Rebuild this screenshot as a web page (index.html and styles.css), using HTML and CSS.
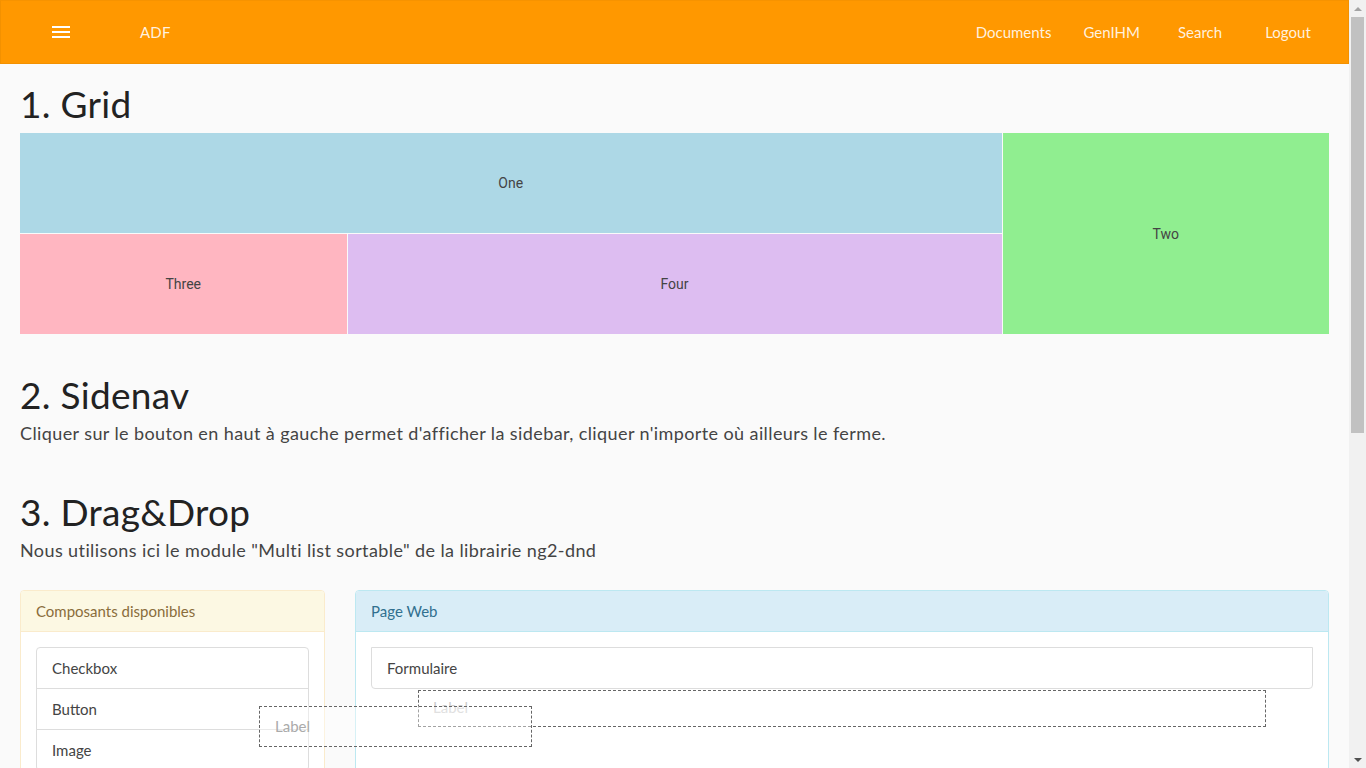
FILE: index.html
```html
<!DOCTYPE html>
<html lang="fr">
<head>
<meta charset="utf-8">
<title>ADF</title>
<link rel="stylesheet" href="styles.css">
</head>
<body>
<header class="toolbar">
  <button class="menu-btn" aria-label="menu">
    <svg width="18" height="12" viewBox="0 0 18 12"><rect x="0" y="0" width="18" height="2" fill="#fff"/><rect x="0" y="5" width="18" height="2" fill="#fff"/><rect x="0" y="10" width="18" height="2" fill="#fff"/></svg>
  </button>
  <span class="brand">ADF</span>
  <nav class="nav">
    <a class="nav-link">Documents</a>
    <a class="nav-link">GenIHM</a>
    <a class="nav-link">Search</a>
    <a class="nav-link">Logout</a>
  </nav>
</header>
<main class="content">
  <h1 class="title first">1. Grid</h1>
  <div class="grid">
    <div class="tile one">One</div>
    <div class="tile two">Two</div>
    <div class="tile three">Three</div>
    <div class="tile four">Four</div>
  </div>

  <h1 class="title sec2">2. Sidenav</h1>
  <p class="lead">Cliquer sur le bouton en haut à gauche permet d'afficher la sidebar, cliquer n'importe où ailleurs le ferme.</p>

  <h1 class="title sec3">3. Drag&amp;Drop</h1>
  <p class="lead">Nous utilisons ici le module "Multi list sortable" de la librairie ng2-dnd</p>

  <div class="dnd">
    <div class="panel panel-warning">
      <div class="panel-heading">Composants disponibles</div>
      <div class="panel-body">
        <ul class="list-group">
          <li class="list-item">Checkbox</li>
          <li class="list-item">Button</li>
          <li class="list-item">Image</li>
        </ul>
      </div>
    </div>
    <div class="panel panel-info">
      <div class="panel-heading">Page Web</div>
      <div class="panel-body drop-zone">
        <ul class="list-group">
          <li class="list-item">Formulaire</li>
        </ul>
        <div class="placeholder">Label</div>
      </div>
    </div>
    <div class="drag-ghost">Label</div>
  </div>
</main>
<div class="scrollbar" aria-hidden="true">
  <div class="sb-arrow up"></div>
  <div class="sb-track"><div class="sb-thumb"></div></div>
  <div class="sb-arrow down"></div>
</div>
</body>
</html>
```
FILE: styles.css
```css
html, body {
  margin: 0;
  padding: 0;
}
body {
  background: #fafafa;
  font-family: "Lato", "Open Sans", sans-serif;
  color: #333;
  margin-right: 17px;
}
.toolbar {
  box-sizing: border-box;
  height: 64px;
  background: #ff9800;
  border: 1px solid #f39100;
  border-top-color: #f79300;
  display: flex;
  align-items: center;
  padding: 0 16px;
  color: rgba(255,255,255,0.88);
}
.menu-btn {
  width: 88px;
  height: 36px;
  background: none;
  border: 0;
  padding: 0;
  display: flex;
  align-items: center;
  justify-content: center;
  cursor: pointer;
}
.brand {
  margin-left: 35px;
  font-size: 15px;
  letter-spacing: 0.2px;
}
.nav {
  margin-left: auto;
  display: flex;
}
.nav-link {
  min-width: 88px;
  padding: 0 16px;
  box-sizing: border-box;
  text-align: center;
  font-size: 15px;
  line-height: 36px;
  color: rgba(255,255,255,0.88);
  cursor: pointer;
}
.content {
  padding: 0 20px;
  min-height: 1288px;
}
.title {
  font-size: 37px;
  font-weight: 400;
  line-height: 40px;
  letter-spacing: 0.3px;
  color: #222;
  margin: 0;
}
.title.first { margin-top: 20px; margin-bottom: 9px; }
.title.sec2 { margin-top: 41px; }
.title.sec3 { margin-top: 49px; }
.lead {
  margin: 8px 0 0;
  font-size: 18px;
  line-height: 20px;
  letter-spacing: 0.4px;
  color: #444;
}
.grid {
  display: grid;
  grid-template-columns: repeat(4, 1fr);
  grid-template-rows: 100px 100px;
  gap: 1px;
  font-family: "Roboto", sans-serif;
  font-size: 14px;
  color: #444;
}
.tile {
  display: flex;
  align-items: center;
  justify-content: center;
}
.one { grid-column: 1 / 4; background: #add8e6; }
.two { grid-column: 4; grid-row: 1 / 3; background: #90ee90; }
.three { background: #ffb6c1; }
.four { grid-column: 2 / 4; background: #ddbdf1; }

.dnd {
  position: relative;
  margin-top: 30px;
  display: grid;
  grid-template-columns: 305px 1fr;
  column-gap: 30px;
  align-items: start;
}
.panel {
  background: #fff;
  border: 1px solid #ddd;
  border-radius: 4px;
}
.panel-heading {
  padding: 10px 15px;
  font-size: 15px;
  line-height: 20px;
  border-bottom: 1px solid transparent;
  border-radius: 3px 3px 0 0;
}
.panel-warning { border-color: #faebcc; }
.panel-warning .panel-heading { background: #fcf8e3; color: #8a6d3b; border-bottom-color: #faebcc; }
.panel-info { border-color: #bce8f1; }
.panel-info .panel-heading { background: #d9edf7; color: #31708f; border-bottom-color: #bce8f1; }
.panel-body {
  padding: 15px;
}
.drop-zone { min-height: 600px; }
.list-group {
  list-style: none;
  margin: 0;
  padding: 0;
}
.list-item {
  padding: 10px 15px;
  border: 1px solid #ddd;
  margin-bottom: -1px;
  font-size: 15px;
  line-height: 20px;
  color: #444;
  background: #fff;
}
.list-item:first-child { border-radius: 4px 4px 0 0; }
.list-item:last-child { border-radius: 0 0 4px 4px; margin-bottom: 0; }
.placeholder {
  position: absolute;
  left: 398px;
  top: 100px;
  width: 848px;
  height: 37px;
  box-sizing: border-box;
  border: 1px dashed #666;
  padding: 7px 14px;
  font-size: 15px;
  line-height: 18px;
  color: #ccc;
}
.drag-ghost {
  position: absolute;
  left: 239px;
  top: 116px;
  width: 273px;
  height: 41px;
  box-sizing: border-box;
  border: 1px dashed #666;
  padding: 9px 15px;
  font-size: 15px;
  line-height: 20px;
  color: #aaa;
  background: rgba(255,255,255,0.4);
}
.scrollbar {
  position: fixed;
  top: 0;
  right: 0;
  width: 17px;
  height: 100vh;
  background: #f1f1f1;
  display: flex;
  flex-direction: column;
}
.sb-arrow {
  height: 17px;
  display: flex;
  align-items: center;
  justify-content: center;
}
.sb-arrow::before {
  content: "";
  width: 0;
  height: 0;
  border-left: 4px solid transparent;
  border-right: 4px solid transparent;
}
.sb-arrow.up::before { border-bottom: 4px solid #a3a3a3; }
.sb-arrow.down::before { border-top: 4px solid #505050; }
.sb-track {
  flex: 1;
  padding: 0 2px;
}
.sb-thumb {
  height: 416px;
  background: #c1c1c1;
}
```
